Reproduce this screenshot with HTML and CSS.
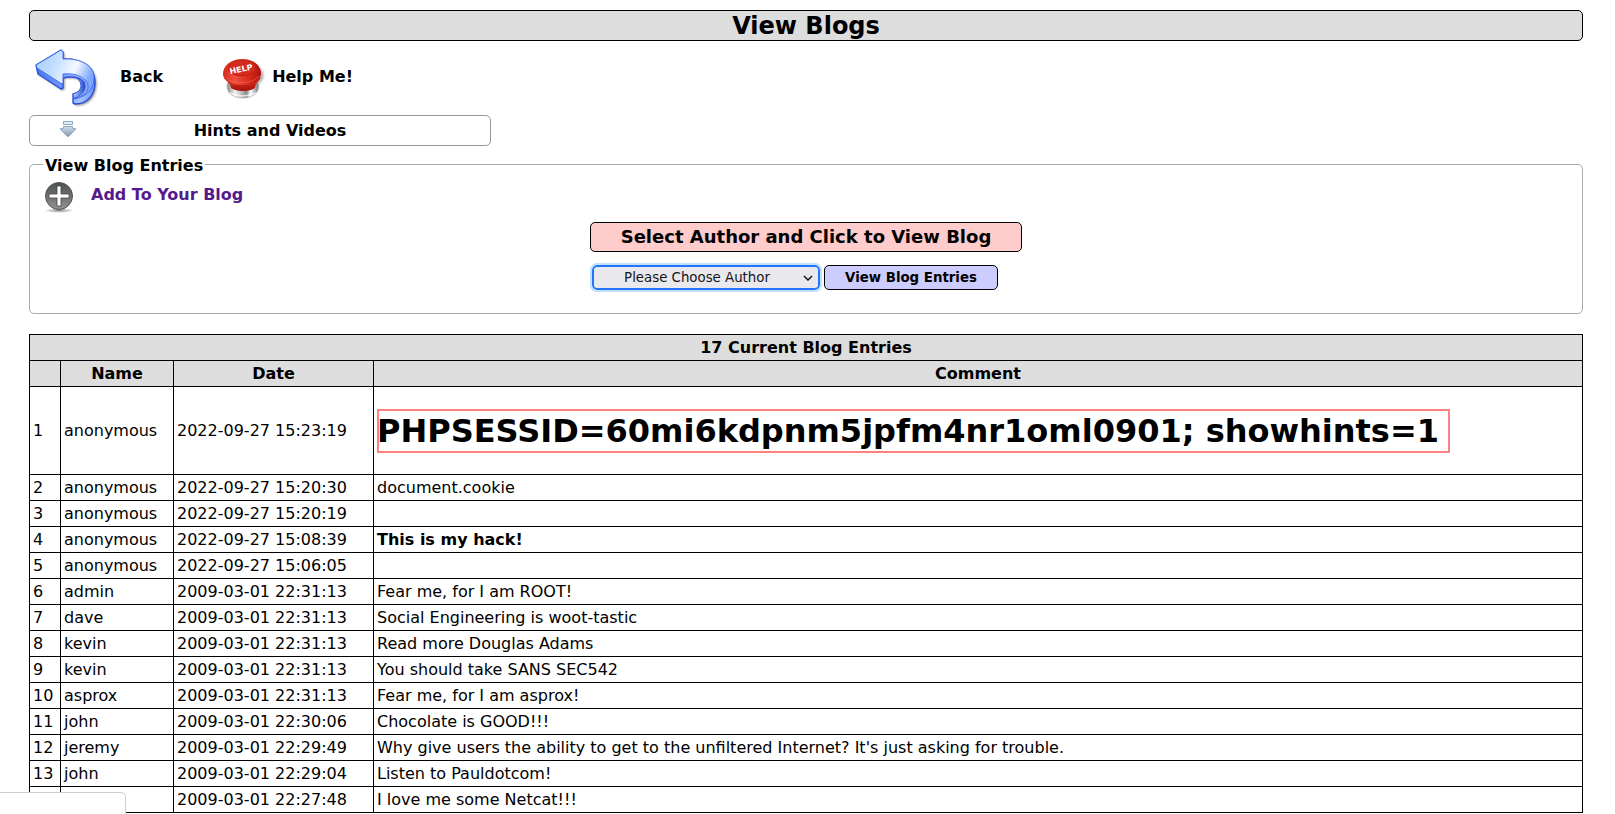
FILE: index.html
```html
<!DOCTYPE html>
<html lang="en">
<head>
<meta charset="utf-8">
<title>View Blogs</title>
<link rel="stylesheet" href="styles.css">
</head>
<body>
<main class="page">
  <header class="page-title">View Blogs</header>

  <nav class="toolbar">
    <a class="tool tool-back" href="#">
      <svg width="64" height="60" viewBox="0 0 64 60" aria-hidden="true">
        <defs>
          <linearGradient id="bf" x1="0" y1="0" x2="1" y2=".35"><stop offset="0" stop-color="#a4ccff"/><stop offset=".35" stop-color="#bfdcff"/><stop offset=".72" stop-color="#f4f9ff"/><stop offset="1" stop-color="#7ea8fb"/></linearGradient>
          <linearGradient id="bs" x1="0" y1="0" x2="1" y2="0"><stop offset="0" stop-color="#4a78ee"/><stop offset=".45" stop-color="#6f9cf8"/><stop offset=".75" stop-color="#a3c4ff"/><stop offset="1" stop-color="#6a95f6"/></linearGradient>
          <linearGradient id="bi" x1="0" y1="0" x2="1" y2="0"><stop offset="0" stop-color="#b4d0ff"/><stop offset="1" stop-color="#2148c8"/></linearGradient>
          <filter id="bb" x="-10%" y="-10%" width="120%" height="120%"><feGaussianBlur stdDeviation="0.8"/></filter>
        </defs>
        <path d="M1 17 26 2 28 4V11C46 10 60 19 60 34C60 48 52 56 40 56L38 55V46C46 44 50 39 49 34C44 29 36 28 28 29V40L26 41 3 26Z" transform="translate(1.500 1.500)" fill="#555" opacity=".7" filter="url(#bb)"/>
        <path d="M1 17 26 2 28 4V11C46 10 60 19 60 34C60 48 52 56 40 56L38 55V46C46 44 50 39 49 34C44 29 36 28 28 30V40L26 41 3 26Z" fill="url(#bs)" stroke="#2f50dc" stroke-width="1.400" stroke-linejoin="round"/>
        <path d="M46 31C54 37 50 47 39 50L38 46C45 44 49 38 43 31Z" fill="url(#bi)" stroke="#2f50dc" stroke-width=".8"/>
        <path d="M1 17 26 2 28 4V11C46 10 59 18 59 28C60 40 52 49 39 51C52 47 56 40 51 33C46 27 37 25 28 26V35L27 36 2 20Z" fill="url(#bf)" stroke="#4069e6" stroke-width=".9" stroke-linejoin="round"/>
      </svg>
      <span>Back</span>
    </a>
    <a class="tool tool-help" href="#">
      <svg width="44" height="42" viewBox="0 -1 44 42" aria-hidden="true">
        <defs>
          <linearGradient id="hr" x1="0" y1="0" x2="1" y2="0"><stop offset="0" stop-color="#d3281b"/><stop offset=".3" stop-color="#f0503e"/><stop offset=".7" stop-color="#d9291b"/><stop offset="1" stop-color="#ad150c"/></linearGradient>
          <linearGradient id="hn" x1="0" y1="0" x2="0" y2="1"><stop offset="0" stop-color="#e03a2b"/><stop offset="1" stop-color="#a50f07"/></linearGradient>
          <linearGradient id="hc" x1="0" y1="0" x2="1" y2="0"><stop offset="0" stop-color="#888"/><stop offset=".25" stop-color="#f4f4f4"/><stop offset=".5" stop-color="#b0b0b0"/><stop offset=".62" stop-color="#888"/><stop offset=".75" stop-color="#fff"/><stop offset="1" stop-color="#777"/></linearGradient>
          <filter id="hb" x="-30%" y="-30%" width="160%" height="160%"><feGaussianBlur stdDeviation="1.2"/></filter>
        </defs>
        <path d="M33 8C44 12 44 20 37 26L36 32 32 36Z" fill="#999" opacity=".7" filter="url(#hb)"/>
        <path d="M6 24C3 32 8 40 21 40C33 40 38 33 36 25Z" fill="url(#hc)" stroke="#aaa" stroke-width=".6"/>
        <path d="M8 35Q20 41 34 35" fill="none" stroke="#fff" stroke-width="1.500" opacity=".7"/>
        <path d="M2 20C8 26 9 28 9 30C14 34 28 34 33 30C33 27 35 25 39 20Z" fill="url(#hn)"/>
        <path d="M1 16C1 8 8 1 20 1C32 1 39 8 39 15C39 22 32 27 21 27C9 27 1 23 1 16Z" fill="url(#hr)"/>
        <ellipse cx="20" cy="10" rx="14" ry="8" fill="#d52b1e" stroke="#b31c10" stroke-width=".7"/>
        <path d="M3 19C9 26 31 27 37 18" fill="none" stroke="#f7705f" opacity=".5"/>
        <text class="help-mark" x="19" y="14" text-anchor="middle" transform="rotate(-12 19 11)">HELP</text>
      </svg>
      <span>Help Me!</span>
    </a>
  </nav>

  <button class="hints" type="button">
    <svg width="16" height="16" viewBox="0 0 16 16" aria-hidden="true">
      <defs><linearGradient id="dg" x1="0" y1="0" x2="0" y2="1"><stop offset="0" stop-color="#d2deed"/><stop offset="1" stop-color="#8495ad"/></linearGradient></defs>
      <path d="M3.500.5h9v3h-9z" fill="#e1ecf8" stroke="#8fa5c1"/>
      <path d="M3.500 5.500h9v2h3v1l-7 7h-1l-7-7v-1h3z" fill="url(#dg)" stroke="#8fa5c1"/>
    </svg>
    <span>Hints and Videos</span>
  </button>

  <fieldset class="entries">
    <legend>View Blog Entries</legend>
    <a class="add-link" href="#">
      <svg width="30" height="32" viewBox="0 0 30 32" aria-hidden="true">
        <defs>
          <linearGradient id="pg" x1="0" y1="0" x2="0" y2="1"><stop offset="0" stop-color="#4b4f4d"/><stop offset="1" stop-color="#929492"/></linearGradient>
          <radialGradient id="ps"><stop offset="0" stop-color="#888"/><stop offset="1" stop-color="#888" stop-opacity="0"/></radialGradient>
        </defs>
        <ellipse cx="14" cy="28.500" rx="15" ry="2.500" fill="url(#ps)"/>
        <circle cx="14" cy="14" r="13.500" fill="url(#pg)" stroke="#505552"/>
        <path d="M12 4h4v8h8v4h-8v8h-4v-8H4v-4h8z" fill="#fff" stroke="#444" stroke-width=".8"/>
      </svg>
      <span>Add To Your Blog</span>
    </a>
    <form class="author-form">
      <label class="prompt" for="author">Select Author and Click to View Blog</label>
      <div class="controls">
        <div class="select-wrap">
          <select id="author"><option>Please Choose Author</option></select>
          <svg width="10" height="6" viewBox="0 0 10 6" aria-hidden="true"><path d="M1 1l4 4 4-4" fill="none" stroke="#15141a" stroke-width="1.500"/></svg>
        </div>
        <button class="submit" type="button">View Blog Entries</button>
      </div>
    </form>
  </fieldset>

  <table class="blog">
    <colgroup><col class="c-num"><col class="c-name"><col class="c-date"><col></colgroup>
    <thead>
      <tr><th colspan="4">17 Current Blog Entries</th></tr>
      <tr><th></th><th>Name</th><th>Date</th><th>Comment</th></tr>
    </thead>
    <tbody>
      <tr><td>1</td><td>anonymous</td><td>2022-09-27 15:23:19</td><td><h1 class="cookie">PHPSESSID=60mi6kdpnm5jpfm4nr1oml0901; showhints=1 </h1></td></tr>
      <tr><td>2</td><td>anonymous</td><td>2022-09-27 15:20:30</td><td>document.cookie</td></tr>
      <tr><td>3</td><td>anonymous</td><td>2022-09-27 15:20:19</td><td></td></tr>
      <tr><td>4</td><td>anonymous</td><td>2022-09-27 15:08:39</td><td><b>This is my hack!</b></td></tr>
      <tr><td>5</td><td>anonymous</td><td>2022-09-27 15:06:05</td><td></td></tr>
      <tr><td>6</td><td>admin</td><td>2009-03-01 22:31:13</td><td>Fear me, for I am ROOT!</td></tr>
      <tr><td>7</td><td>dave</td><td>2009-03-01 22:31:13</td><td>Social Engineering is woot-tastic</td></tr>
      <tr><td>8</td><td>kevin</td><td>2009-03-01 22:31:13</td><td>Read more Douglas Adams</td></tr>
      <tr><td>9</td><td>kevin</td><td>2009-03-01 22:31:13</td><td>You should take SANS SEC542</td></tr>
      <tr><td>10</td><td>asprox</td><td>2009-03-01 22:31:13</td><td>Fear me, for I am asprox!</td></tr>
      <tr><td>11</td><td>john</td><td>2009-03-01 22:30:06</td><td>Chocolate is GOOD!!!</td></tr>
      <tr><td>12</td><td>jeremy</td><td>2009-03-01 22:29:49</td><td>Why give users the ability to get to the unfiltered Internet? It's just asking for trouble.</td></tr>
      <tr><td>13</td><td>john</td><td>2009-03-01 22:29:04</td><td>Listen to Pauldotcom!</td></tr>
      <tr><td></td><td></td><td>2009-03-01 22:27:48</td><td>I love me some Netcat!!!</td></tr>
    </tbody>
  </table>
</main>
<div class="status"></div>
</body>
</html>
```
FILE: styles.css
```css
* { box-sizing: border-box; }
body {
  margin: 0;
  background: #fff;
  color: #000;
  font: 16px/19px "DejaVu Sans", sans-serif;
}
svg { display: block; flex: none; }
.page { padding: 10px 32px 0 29px; }
.page-title {
  height: 31px;
  padding-top: 1px;
  border: 1px solid #000;
  border-radius: 5px;
  background: #ddd;
  text-align: center;
  font-size: 24px;
  font-weight: bold;
  line-height: 29px;
}
.toolbar {
  display: flex;
  height: 74px;
  padding: 0 6px;
  align-items: center;
}
.tool {
  display: flex;
  align-items: center;
  color: #000;
  font-weight: bold;
  text-decoration: none;
}
.tool span { padding-bottom: 3px; }
.tool-back { gap: 21px; margin-right: 59px; }
.tool-help { gap: 6px; }
.help-mark { font: bold 8px "DejaVu Sans", sans-serif; fill: #fff; }
.hints {
  display: grid;
  grid-template-columns: 16px 1fr;
  gap: 18px;
  align-items: center;
  width: 462px;
  height: 31px;
  padding: 0 44px 0 30px;
  border: 1px solid #999;
  border-radius: 5px;
  background: #fff;
  color: #000;
  font: inherit;
  font-weight: bold;
}
.hints svg { align-self: start; margin-top: 5px; }
.entries {
  margin: 8px 0 20px;
  padding: 7px 15px 23px;
  border: 1px solid #aaa;
  border-radius: 5px;
}
.entries legend {
  padding: 2px 2px 0;
  margin-left: -2px;
  font-weight: bold;
}
.add-link {
  display: flex;
  width: fit-content;
  gap: 16px;
  color: #551a8b;
  font-weight: bold;
  text-decoration: none;
}
.add-link span { margin-top: 3px; }
.author-form {
  width: 432px;
  margin: 8px auto 0;
}
.prompt {
  display: block;
  height: 30px;
  border: 1px solid #000;
  border-radius: 5px;
  background: #fcc;
  text-align: center;
  font-size: 18px;
  font-weight: bold;
  line-height: 28px;
}
.controls {
  display: flex;
  gap: 4px;
  margin-top: 13px;
  padding-left: 2px;
}
.select-wrap {
  display: grid;
  grid-template-columns: 1fr 17px;
  align-items: center;
  width: 228px;
}
.select-wrap select {
  grid-area: 1 / 1 / 2 / 3;
  appearance: none;
  height: 25px;
  padding: 0 18px 0 0;
  border: 2px solid #2374ff;
  border-radius: 5px;
  outline: 2px solid #bfe0ff;
  background: #e9e9ed;
  color: #15141a;
  font-family: "DejaVu Sans", sans-serif;
  text-align: center;
  text-align-last: center;
}
.select-wrap svg { grid-area: 1 / 2; pointer-events: none; }
.submit {
  width: 174px;
  height: 25px;
  padding: 0;
  border: 1px solid #000;
  border-radius: 5px;
  background: #ccf;
  color: #000;
  font-family: "DejaVu Sans", sans-serif;
  font-weight: bold;
}
.blog {
  width: 100%;
  border-collapse: collapse;
  table-layout: fixed;
}
.c-num { width: 31px; }
.c-name { width: 113px; }
.c-date { width: 200px; }
.blog th, .blog td {
  height: 26px;
  padding: 3px;
  border: 1px solid #000;
  text-align: left;
}
.blog th { background: #ddd; text-align: center; }
.cookie {
  width: fit-content;
  margin: 19px 0 18px;
  padding: 3px 0;
  box-shadow: inset 0 0 0 2px #ff8080;
  font-size: 32px;
  line-height: 38px;
  white-space: pre;
}
.status {
  position: fixed;
  left: 0;
  bottom: 0;
  width: 126px;
  height: 22px;
  border: 1px solid #d0d0d0;
  border-width: 1px 1px 0 0;
  border-radius: 0 5px 0 0;
  background: #fff;
}
```
